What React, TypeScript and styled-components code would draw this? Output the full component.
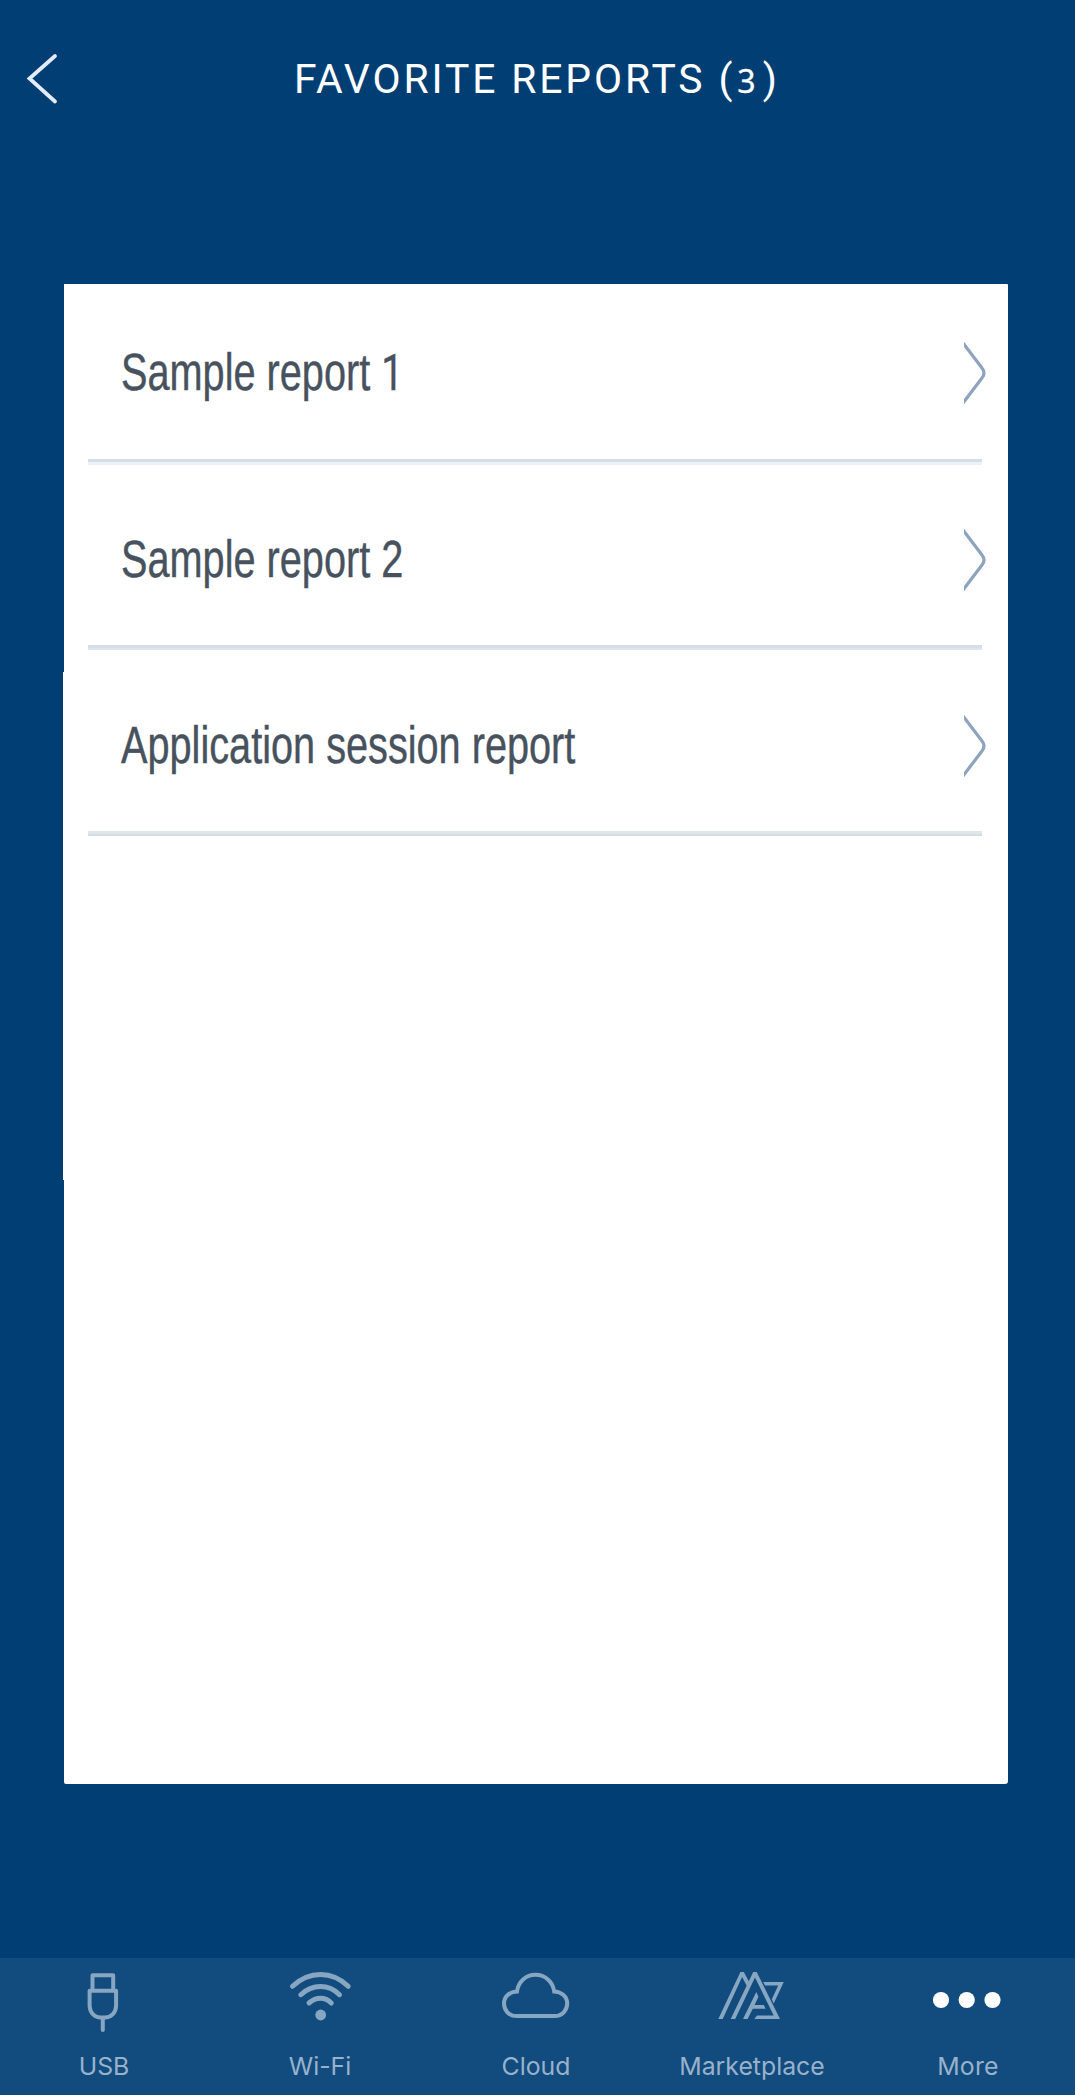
import React from 'react';
import styled, { createGlobalStyle } from 'styled-components';

const GlobalStyle = createGlobalStyle`
  *, *::before, *::after { box-sizing: border-box; }
  body { margin: 0; background: #003e74; }
`;

const Screen = styled.div`
  display: flex;
  flex-direction: column;
  width: 1075px;
  height: 2095px;
  overflow: hidden;
  background: #003e74;
`;

const Header = styled.header`
  display: grid;
  grid-template-columns: 297px 1fr;
  align-items: center;
  height: 158px;
  flex: none;
`;

const BackButton = styled.button`
  width: 60px;
  height: 80px;
  margin-left: 12px;
  padding: 0;
  border: 0;
  background: none;
  svg { display: block; }
`;

const Title = styled.h1`
  margin: 0 0 0 -3px;
  font: 400 40.8px/60px Roboto, sans-serif;
  letter-spacing: 2.9px;
  color: #fff;
  white-space: nowrap;
`;

const Count = styled.span`
  margin: 0 7px 0 2px;
  font: 400 32px/1 "Noto Sans", sans-serif;
  letter-spacing: 0;
  -webkit-text-stroke: 0.3px #fff;
`;

const Panel = styled.main`
  flex: none;
  width: 944px;
  height: 1500px;
  margin: 126px 0 0 64px;
  background: #fff;
  border-radius: 0 1px 3px 2px;
`;

const PanelEdge = styled.div`
  position: absolute;
  left: 63px;
  top: 672px;
  width: 1px;
  height: 508px;
  background: #fff;
`;

const Row = styled.div<{ $height: number; $offset: number }>`
  display: flex;
  align-items: center;
  justify-content: space-between;
  height: ${(p) => p.$height}px;
  padding: ${(p) => p.$offset}px 22px 0 57px;
`;

const RowLabel = styled.span`
  display: block;
  font: 400 51px/64px "Liberation Sans", Arial, sans-serif;
  color: #47525e;
  -webkit-text-stroke: 0.4px #47525e;
  white-space: nowrap;
  transform: scaleX(0.778);
  transform-origin: 0 50%;
`;

const PlainOne = styled.span`
  font-family: Roboto, sans-serif;
  font-size: 50px;
  line-height: 1;
`;

const Divider = styled.div<{ $top: string; $bottom: string; $height: number }>`
  width: 894px;
  height: ${(p) => p.$height}px;
  margin-left: 24px;
  border-top: 3px solid ${(p) => p.$top};
  background: ${(p) => p.$bottom};
`;

const TabBar = styled.nav`
  display: grid;
  grid-template-columns: repeat(5, 216px);
  width: 1080px;
  height: 137px;
  margin-top: auto;
  margin-left: -4px;
  background: #124b7d;
  flex: none;
`;

const Tab = styled.div`
  display: flex;
  flex-direction: column;
  align-items: center;
`;

const TabIcon = styled.div`
  height: 88px;
  color: #86a6c2;
  svg { display: block; }
`;

const TabLabel = styled.span<{ $spacing: number }>`
  font: 400 24.8px/40px Inter, sans-serif;
  letter-spacing: ${(p) => p.$spacing}px;
  color: #98b2cc;
  white-space: nowrap;
`;

const Chevron = () => (
  <svg width="22" height="62" viewBox="0 0 22 62" fill="none">
    <path d="M-1 1 L18 26 Q22 31 18 36 L-1 61" stroke="#8ea3bd" strokeWidth="3.2" />
  </svg>
);

/* Icon artwork shares a 100 x 88 box whose centre line is x = 50. */
const Icon = ({ children }: { children: React.ReactNode }) => (
  <svg width="100" height="88" viewBox="0 0 100 88" fill="none" stroke="currentColor" strokeWidth="4">
    {children}
  </svg>
);

const UsbIcon = () => (
  <Icon>
    <g transform="translate(-1 0)">
      <path d="M39.5 31V17.3H60.2V31M36.6 32.7H63.1V47.5C63.1 55 57.5 59.5 52 59.5H47.7C42.2 59.5 36.6 55 36.6 47.5Z" strokeLinejoin="round" />
      <path d="M49.8 60V72" strokeLinecap="round" />
    </g>
  </Icon>
);

const WifiIcon = () => (
  <Icon>
    <g strokeWidth="5" strokeLinecap="round">
      <path d="M22.5 28.3Q35 16.5 50.5 16.5T78.2 28.3" />
      <path d="M30.8 36.7Q39.5 28.5 50.5 28.5T69.5 36.7" />
      <path d="M39 45Q44.5 40.3 50.5 40.3T61.3 45" />
    </g>
    <circle cx="50.7" cy="57" r="5.4" fill="currentColor" stroke="none" />
  </Icon>
);

const CloudIcon = () => (
  <Icon>
    <path d="M30.4 58C22.8 58 18 52.2 18 45.6C18 38.7 23.4 33.8 31 33.5C32.3 23.8 39.8 16.8 49.5 16.8C59.2 16.8 66.8 23.8 68.2 33.5C75.7 33.8 81.2 38.7 81.2 45.6C81.2 52.2 76.2 58 68.7 58Z" />
  </Icon>
);

const MarketIcon = () => (
  <Icon>
    <g fill="currentColor" stroke="none">
      <path d="M16.3 61L38.4 14H41.8L48 25.5L45.8 29.8L40.1 19L20.7 61Z" />
      <path d="M28.7 61L51.2 14H54.7L78 61H52.3L55 57.5H71.7L53 19.6L33.2 61Z" />
      <path d="M41 61L54.3 34L56.5 38.7L52.6 47H61.8L63.7 50.7H50.8L45.6 61Z" />
      <path d="M61.2 24H81.8L71.7 45.5L69.8 41.2L76.2 27.5H63Z" />
    </g>
  </Icon>
);

const MoreIcon = () => (
  <Icon>
    <g fill="#fff" stroke="none">
      <circle cx="23" cy="42" r="8.1" />
      <circle cx="48.7" cy="42" r="8.1" />
      <circle cx="74.5" cy="42" r="8.1" />
    </g>
  </Icon>
);

const reports = [
  { id: 'r1', name: <>Sample report <PlainOne>1</PlainOne></>, height: 175, offset: 3, line: 6, top: '#d5dde5', bottom: '#edf0f4' },
  { id: 'r2', name: 'Sample report 2', height: 180, offset: 9, line: 5, top: '#d5dde6', bottom: '#dfe5ea' },
  { id: 'r3', name: 'Application session report', height: 181, offset: 10, line: 5, top: '#e1e6eb', bottom: '#d4dce4' },
];

const tabs = [
  { name: 'USB', icon: <UsbIcon />, spacing: 0 },
  { name: 'Wi-Fi', icon: <WifiIcon />, spacing: 0 },
  { name: 'Cloud', icon: <CloudIcon />, spacing: 0 },
  { name: 'Marketplace', icon: <MarketIcon />, spacing: 0 },
  { name: 'More', icon: <MoreIcon />, spacing: 0.2 },
];

export default function App() {
  return (
    <>
      <GlobalStyle />
      <Screen>
        <Header>
          <BackButton aria-label="Back">
            <svg width="60" height="80" viewBox="0 0 60 80" fill="none">
              <path d="M43 17L17.5 39.5L43 62.5" stroke="#e3ecf8" strokeWidth="3.8" strokeLinecap="round" />
            </svg>
          </BackButton>
          <Title>FAVORITE REPORTS (<Count>3</Count>)</Title>
        </Header>
        <Panel>
          {reports.map((r) => (
            <React.Fragment key={r.id}>
              <Row $height={r.height} $offset={r.offset}>
                <RowLabel>{r.name}</RowLabel>
                <Chevron />
              </Row>
              <Divider $top={r.top} $bottom={r.bottom} $height={r.line} />
            </React.Fragment>
          ))}
        </Panel>
        <PanelEdge />
        <TabBar>
          {tabs.map((t) => (
            <Tab key={t.name}>
              <TabIcon>{t.icon}</TabIcon>
              <TabLabel $spacing={t.spacing}>{t.name}</TabLabel>
            </Tab>
          ))}
        </TabBar>
      </Screen>
    </>
  );
}
